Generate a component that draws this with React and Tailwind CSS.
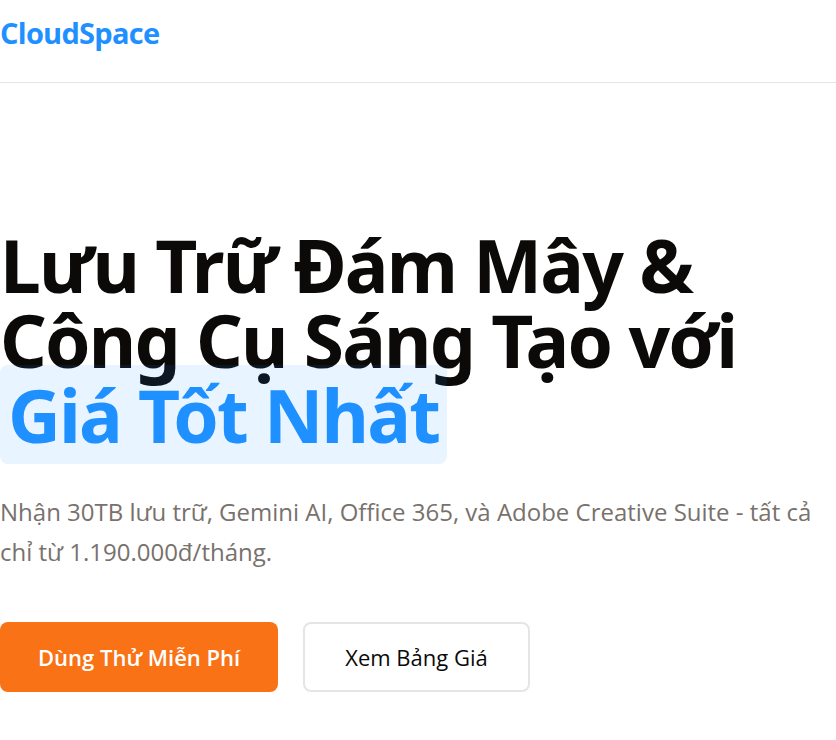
export default function App() {
  return (
    <div className="min-h-screen bg-white font-['Open_Sans','Noto_Sans',sans-serif] text-[#0a0a0a]">
      <header className="border-b border-[#e5e5e5] pt-3 pb-7">
        <a href="#" className="block text-[29px] leading-[42px] font-bold tracking-tight text-[#1e90ff]">CloudSpace</a>
      </header>
      <main className="pt-36">
        <h1 className="font-['Noto_Sans',sans-serif] text-[73px] leading-[75px] font-bold tracking-tight text-[#0c0a09]">
          Lưu Trữ Đám Mây &amp;<br />
          Công Cụ Sáng Tạo với<br />
          <span className="rounded-lg bg-[#1e90ff]/10 px-2 text-[#1e90ff]">Giá Tốt Nhất</span>
        </h1>
        <p className="mt-10 text-2xl leading-10 text-[#78716c]">
          Nhận 30TB lưu trữ, Gemini AI, Office 365, và Adobe Creative Suite - tất cả chỉ từ 1.190.000đ/tháng.
        </p>
        <div className="mt-[50px] flex flex-wrap gap-[25px]">
          <button type="button" className="h-[70px] rounded-lg bg-[#f97316] px-[38px] text-[22px] font-semibold text-white">Dùng Thử Miễn Phí</button>
          <button type="button" className="h-[70px] rounded-lg border-2 border-[#e5e5e5] bg-white px-10 text-[22px] font-medium">Xem Bảng Giá</button>
        </div>
      </main>
    </div>
  );
}
